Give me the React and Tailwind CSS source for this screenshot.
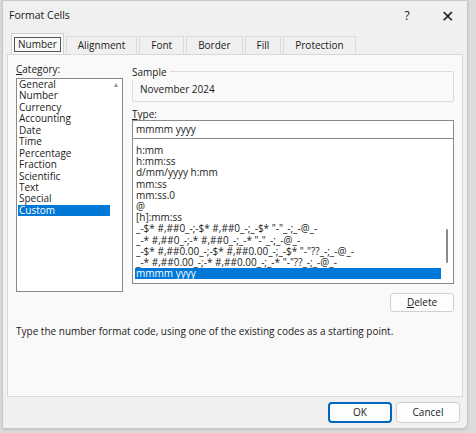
export default function App() {
  const cats = ["General","Number","Currency","Accounting","Date","Time","Percentage","Fraction","Scientific","Text","Special","Custom"];
  const types = ["h:mm","h:mm:ss","d/mm/yyyy h:mm","mm:ss","mm:ss.0","@","[h]:mm:ss",
    '_-$* #,##0_-;-$* #,##0_-;_-$* "-"_-;_-@_-',
    '_-* #,##0_-;-* #,##0_-;_-* "-"_-;_-@_-',
    '_-$* #,##0.00_-;-$* #,##0.00_-;_-$* "-"??_-;_-@_-',
    '_-* #,##0.00_-;-* #,##0.00_-;_-* "-"??_-;_-@_-',
    "mmmm yyyy"];
  const tabs = ["Alignment","Font","Border","Fill","Protection"];
  return (
    <div className="w-[476px] h-[433px] bg-[#dcdcdc] text-[10px] text-[#1a1a1a] overflow-hidden" style={{ fontFamily: '"Open Sans", "Liberation Sans", sans-serif' }}>
      <div className="w-[466px] h-[429px] ml-[2px] bg-[#f0f0f0] border border-[#c8c8c8] rounded-br-[6px] shadow flex flex-col">
        <div className="h-[30px] flex items-center pl-[6px] text-[10.5px]">
          <span className="flex-1">Format Cells</span>
          <span className="w-[40px] text-center text-[12px]">?</span>
          <span className="w-[40px] text-center text-[16px] font-light">✕</span>
        </div>
        <div className="flex items-end h-[23px] pl-[8px] gap-[2px]">
          <div className="h-[21px] px-[2px] bg-[#f9f9f9] border border-b-0 border-[#d0d0d0] flex items-center">
            <span className="border border-[#555] px-[3px] leading-[13px] font-medium">Number</span>
          </div>
          {tabs.map((t) => (
            <div key={t} className="h-[18px] px-[11px] bg-[#f0f0f0] border border-b-0 border-[#dadada] flex items-center font-medium">{t}</div>
          ))}
        </div>
        <div className="mx-[4px] h-[343px] bg-[#f9f9f9] border border-[#d8d8d8] flex flex-col px-[8px]">
          <div className="flex gap-[9px] mt-[7px]">
            <div className="w-[107px]">
              <div className="h-[14px]"><u>C</u>ategory:</div>
              <div className="h-[214px] bg-white border border-[#8a8a8a] mt-[2px] flex pl-[1px]">
                <div className="flex-1">
                  {cats.map((c) => (
                    <div key={c} className={`h-[11.45px] leading-[11.45px] pl-[1px] ${c === "Custom" ? "bg-[#0078d7] text-white" : ""}`}>{c}</div>
                  ))}
                </div>
                <div className="w-[12px] text-[7px] text-[#999] text-center pt-[1px]">▲</div>
              </div>
            </div>
            <div className="flex-1 flex flex-col">
              <div className="mt-[9px] border border-[#dcdcdc] rounded-[2px] h-[31px] relative px-[7px] pt-[10px]">
                <span className="absolute -top-[7px] left-[-1px] bg-[#f9f9f9] pr-[3px]">Sample</span>
                November 2024
              </div>
              <div className="mt-[5px] h-[13px]"><u>T</u>ype:</div>
              <div className="h-[19px] bg-white border border-[#8a8a8a] px-[3px] flex items-center">mmmm yyyy</div>
              <div className="h-[145px] bg-white border border-[#8a8a8a] border-t-0 flex pt-[6px] pl-[2px] overflow-hidden">
                <div className="flex-1 overflow-hidden">
                  {types.map((t, i) => (
                    <div key={i} className={`h-[11.2px] leading-[11.2px] pl-[1px] whitespace-nowrap ${t === "mmmm yyyy" ? "bg-[#0078d7] text-white" : ""}`}>{t}</div>
                  ))}
                </div>
                <div className="w-[12px] flex justify-center">
                  <div className="w-[2px] bg-[#8a8a8a] mt-[84px] h-[34px] rounded"></div>
                </div>
              </div>
              <div className="flex justify-end mt-[9px]">
                <button className="w-[64px] h-[19px] bg-[#fdfdfd] border border-[#d0d0d0] rounded-[3px] font-medium"><u>D</u>elete</button>
              </div>
            </div>
          </div>
          <div className="mt-[12px]">Type the number format code, using one of the existing codes as a starting point.</div>
        </div>
        <div className="flex justify-end gap-[4px] pr-[7px] mt-[5px]">
          <button className="w-[64px] h-[21px] bg-[#fdfdfd] border-2 border-[#0067c0] rounded-[4px] font-medium">OK</button>
          <button className="w-[64px] h-[21px] bg-[#fdfdfd] border border-[#d0d0d0] rounded-[4px] font-medium">Cancel</button>
        </div>
      </div>
    </div>
  );
}
